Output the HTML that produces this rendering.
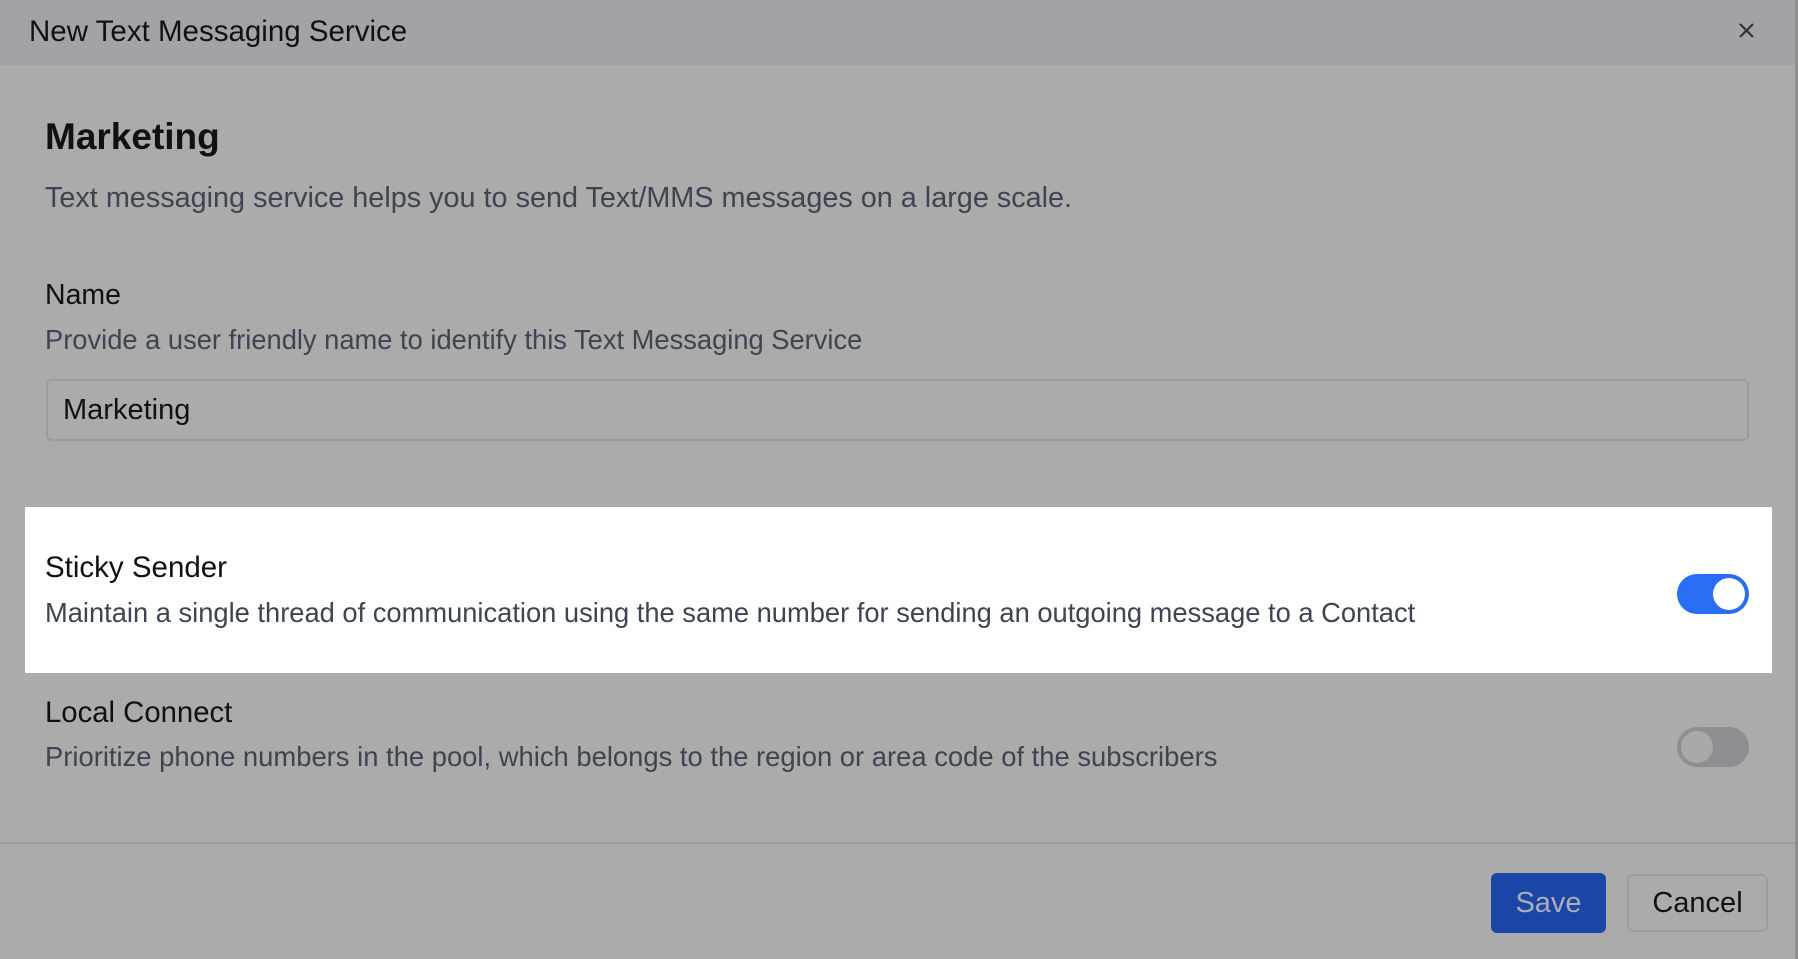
<!DOCTYPE html>
<html><head><style>
*{box-sizing:border-box;margin:0;padding:0}
body{width:1798px;height:959px;background:#8f8f8f;font-family:"Liberation Sans",sans-serif;position:relative;overflow:hidden}
.modal{position:absolute;left:0;top:0;width:1795px;height:959px;background:#ababab}
.hdr{position:absolute;left:0;top:0;width:1795px;height:65px;background:#a2a3a6}
.t{position:absolute;white-space:nowrap}
.hl{position:absolute;left:25px;top:507px;width:1747px;height:166px;background:#fff}
.tg{position:absolute;width:72px;height:40px;border-radius:20px}
.kn{position:absolute;width:32px;height:32px;border-radius:50%;top:4px}
</style></head><body>
<div class="modal">
<div class="hdr"></div>
<div class="t" style="left:29px;top:15px;font-size:29.5px;color:#111">New Text Messaging Service</div>
<svg style="position:absolute;left:1738px;top:22px" width="17" height="17" viewBox="0 0 17 17"><path d="M2 2L15 15M15 2L2 15" stroke="#333" stroke-width="2.2"/></svg>
<div class="t" style="left:45px;top:116px;font-size:37px;font-weight:bold;color:#111">Marketing</div>
<div class="t" style="left:45px;top:182px;font-size:28.8px;color:#3d4452">Text messaging service helps you to send Text/MMS messages on a large scale.</div>
<div class="t" style="left:45px;top:279px;font-size:28.5px;color:#111">Name</div>
<div class="t" style="left:45px;top:324px;font-size:27.3px;color:#3d4452">Provide a user friendly name to identify this Text Messaging Service</div>
<div style="position:absolute;left:46px;top:379px;width:1703px;height:62px;border:2px solid #999ca2;border-radius:6px"></div>
<div class="t" style="left:63px;top:394px;font-size:29px;color:#111">Marketing</div>
<div class="hl"></div>
<div class="t" style="left:45px;top:551px;font-size:29.5px;color:#111">Sticky Sender</div>
<div class="t" style="left:45px;top:597px;font-size:27.3px;color:#3d4452">Maintain a single thread of communication using the same number for sending an outgoing message to a Contact</div>
<div class="tg" style="left:1677px;top:574px;background:#2a6df5"><div class="kn" style="left:36px;background:#fff"></div></div>
<div class="t" style="left:45px;top:696px;font-size:29.3px;color:#111">Local Connect</div>
<div class="t" style="left:45px;top:741px;font-size:27.4px;color:#3d4452">Prioritize phone numbers in the pool, which belongs to the region or area code of the subscribers</div>
<div class="tg" style="left:1677px;top:727px;background:#8e8f93"><div class="kn" style="left:4px;background:#a9a9a9"></div></div>
<div style="position:absolute;left:0;top:842px;width:1795px;height:2px;background:#9c9ea3"></div>
<div style="position:absolute;left:1491px;top:873px;width:115px;height:60px;background:#1b46a8;border-radius:6px;color:#a8adb7;font-size:29px;text-align:center;line-height:60px">Save</div>
<div style="position:absolute;left:1627px;top:874px;width:141px;height:58px;border:2px solid #9c9ea3;border-radius:6px;color:#111;font-size:29px;text-align:center;line-height:54px">Cancel</div>
</div>
</body></html>
